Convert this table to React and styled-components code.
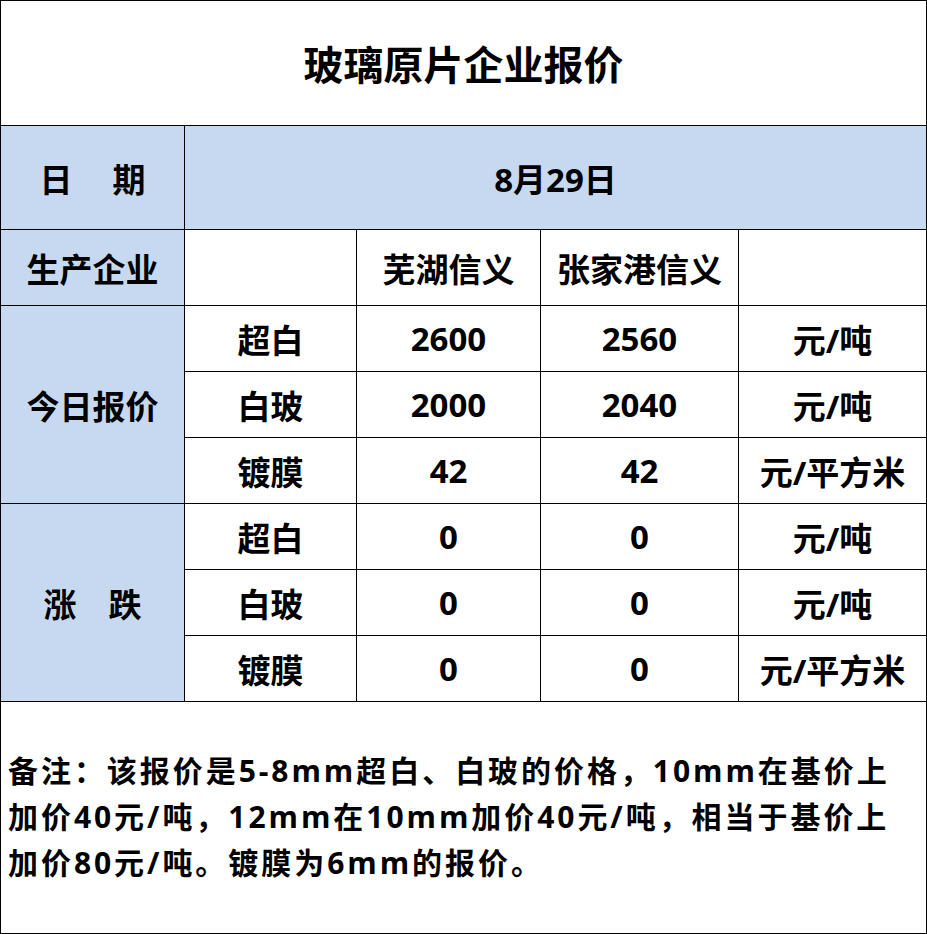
import React from "react";
import styled, { createGlobalStyle } from "styled-components";

const Global = createGlobalStyle`
  html, body { margin: 0; padding: 0; background: #fff; }
  body { font-family: "Open Sans", "Noto Sans CJK SC", sans-serif; }
`;

const Sheet = styled.div`
  width: 927px;
  height: 934px;
  box-sizing: border-box;
  border: 1px solid #000;
  display: flex;
  flex-direction: column;
  font-family: "Open Sans", "Noto Sans CJK SC", sans-serif;
  font-weight: 700;
  color: #000;
`;

const Title = styled.div`
  height: 124px;
  display: flex;
  align-items: center;
  justify-content: center;
  font-size: 40px;
  border-bottom: 1px solid #000;
`;

const Grid = styled.div`
  display: grid;
  grid-template-columns: 184px 172px 184px 198px 187px;
  grid-template-rows: 104px 76px repeat(6, 66px);
`;

const Cell = styled.div`
  display: flex;
  align-items: center;
  justify-content: center;
  font-size: 33px;
  background: ${(p) => (p.$blue ? "#C6D9F0" : "#fff")};
  border-right: ${(p) => (p.$last ? "none" : "1px solid #000")};
  border-bottom: 1px solid #000;
  grid-column: ${(p) => p.$col || "auto"};
  grid-row: ${(p) => p.$row || "auto"};
  white-space: nowrap;
`;

const Spaced = styled.span`
  display: flex;
  gap: ${(p) => p.$gap}px;
`;

const Note = styled.div`
  flex: 1;
  display: flex;
  flex-direction: column;
  justify-content: center;
  padding: 2px 0 4px 7px;
  font-size: 30px;
  line-height: 46px;
  letter-spacing: 2.95px;
  white-space: nowrap;
`;

const NoteLine = styled.div``;

const rows = [
  { label: "今日报价", items: [["超白", "2600", "2560", "元/吨"], ["白玻", "2000", "2040", "元/吨"], ["镀膜", "42", "42", "元/平方米"]] },
  { label: null, items: [["超白", "0", "0", "元/吨"], ["白玻", "0", "0", "元/吨"], ["镀膜", "0", "0", "元/平方米"]] },
];

export default function App() {
  return (
    <>
      <Global />
      <Sheet>
        <Title>玻璃原片企业报价</Title>
        <Grid>
          <Cell $blue>
            <Spaced $gap={40}><span>日</span><span>期</span></Spaced>
          </Cell>
          <Cell $blue $last $col="2 / 6">8月29日</Cell>

          <Cell $blue>生产企业</Cell>
          <Cell></Cell>
          <Cell>芜湖信义</Cell>
          <Cell>张家港信义</Cell>
          <Cell $last></Cell>

          {rows.map((group, gi) => (
            <React.Fragment key={gi}>
              <Cell $blue $row={`${3 + gi * 3} / span 3`} $col="1">
                {group.label ? (
                  group.label
                ) : (
                  <Spaced $gap={32}><span>涨</span><span>跌</span></Spaced>
                )}
              </Cell>
              {group.items.map((it, i) => (
                <React.Fragment key={i}>
                  <Cell $col="2" $row={`${3 + gi * 3 + i}`}>{it[0]}</Cell>
                  <Cell $col="3" $row={`${3 + gi * 3 + i}`}>{it[1]}</Cell>
                  <Cell $col="4" $row={`${3 + gi * 3 + i}`}>{it[2]}</Cell>
                  <Cell $col="5" $row={`${3 + gi * 3 + i}`} $last>{it[3]}</Cell>
                </React.Fragment>
              ))}
            </React.Fragment>
          ))}
        </Grid>
        <Note>
          <NoteLine>备注：该报价是5-8mm超白、白玻的价格，10mm在基价上</NoteLine>
          <NoteLine>加价40元/吨，12mm在10mm加价40元/吨，相当于基价上</NoteLine>
          <NoteLine>加价80元/吨。镀膜为6mm的报价。</NoteLine>
        </Note>
      </Sheet>
    </>
  );
}
